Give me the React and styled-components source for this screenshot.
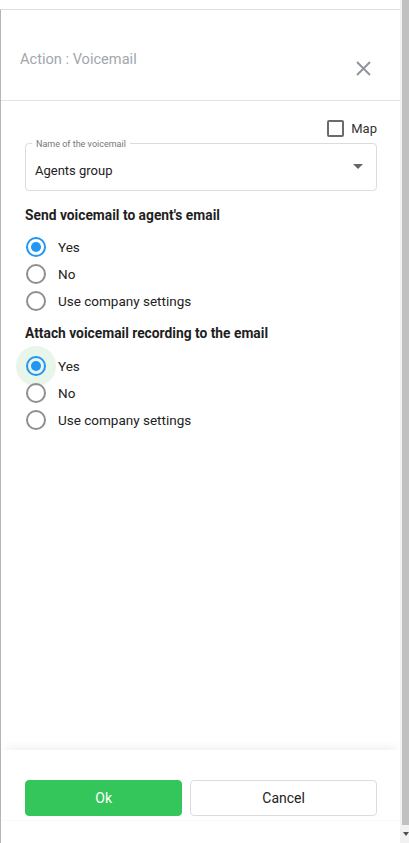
import React from 'react';
import styled, { createGlobalStyle } from 'styled-components';

const Global = createGlobalStyle`
  html, body { margin: 0; padding: 0; background: #fff; }
  body { font-family: Roboto, "Liberation Sans", Arial, sans-serif; color: #222; }
`;

const Page = styled.div`
  display: flex;
  height: 843px;
  width: 409px;
  overflow: hidden;
`;

const Panel = styled.div`
  flex: 1;
  margin-top: 9px;
  border-top: 1px solid #e0e0e0;
  border-left: 1px solid #b5b5b5;
  display: flex;
  flex-direction: column;
`;

const Header = styled.div`
  height: 90px;
  border-bottom: 1px solid #e3e3e3;
  display: flex;
  justify-content: space-between;
  padding: 0 28px 0 19px;
`;

const Title = styled.div`
  margin-top: 40px;
  font-size: 14.6px;
  color: #a2a6ad;
`;

const Close = styled.div`
  margin-top: 50px;
  width: 17px;
  height: 17px;
  color: #8d9299;
`;

const Body = styled.div`
  flex: 1;
  padding: 19px 23px 0 24px;
`;

const MapRow = styled.div`
  display: flex;
  justify-content: flex-end;
  align-items: center;
  gap: 7px;
  font-size: 13px;
  color: #333;
  height: 17px;
`;

const Box = styled.span`
  width: 13px;
  height: 13px;
  border: 2px solid #6b6b6b;
  border-radius: 2px;
`;

const Select = styled.div`
  position: relative;
  margin-top: 6px;
  height: 48px;
  border: 1px solid #dcdcdc;
  border-radius: 4px;
  display: flex;
  align-items: center;
  justify-content: space-between;
  padding: 7px 13px 0 9px;
  box-sizing: border-box;
  font-size: 13px;
  color: #222;
`;

const Legend = styled.span`
  position: absolute;
  top: -5px;
  left: 6px;
  padding: 0 4px;
  background: #fff;
  font-size: 9px;
  color: #777;
  line-height: 10px;
`;

const Arrow = styled.span`
  width: 0;
  height: 0;
  border-left: 5px solid transparent;
  border-right: 5px solid transparent;
  border-top: 5px solid #666;
  margin-top: -9px;
`;

const Section = styled.div`
  font-size: 13.8px;
  font-weight: 700;
  color: #1f1f1f;
  margin-top: ${(p) => p.top}px;
  margin-bottom: ${(p) => p.bottom}px;
`;

const Options = styled.div`
  display: flex;
  flex-direction: column;
  gap: 7px;
`;

const Option = styled.label`
  display: flex;
  align-items: center;
  gap: 12px;
  font-size: 13.5px;
  color: #222;
  height: 20px;
`;

const Radio = styled.span`
  position: relative;
  width: 20px;
  height: 20px;
  box-sizing: border-box;
  border-radius: 50%;
  border: 2px solid ${(p) => (p.checked ? '#2196f3' : '#8f8f8f')};
  display: flex;
  align-items: center;
  justify-content: center;
  &::before {
    content: '';
    display: ${(p) => (p.halo ? 'block' : 'none')};
    position: absolute;
    width: 40px;
    height: 40px;
    border-radius: 50%;
    background: #e8f5e9;
    z-index: -1;
  }
  &::after {
    content: '';
    display: ${(p) => (p.checked ? 'block' : 'none')};
    width: 10px;
    height: 10px;
    border-radius: 50%;
    background: #2196f3;
  }
`;

const RadioWrap = styled.span`
  position: relative;
  z-index: 0;
  display: flex;
  margin-left: 1px;
`;

const Footer = styled.div`
  height: 71px;
  box-shadow: 0 -6px 10px -4px rgba(0, 0, 0, 0.07);
  display: flex;
  align-items: flex-start;
  gap: 8px;
  padding: 30px 23px 0 24px;
  box-sizing: border-box;
  margin-bottom: 22px;
  border-bottom: 1px solid #fafafa;
`;

const Button = styled.button`
  flex: ${(p) => p.grow};
  height: 36px;
  border-radius: 4px;
  font-family: Roboto, "Liberation Sans", Arial, sans-serif;
  font-size: 14px;
  cursor: pointer;
  background: ${(p) => (p.primary ? '#35c65b' : '#fff')};
  color: ${(p) => (p.primary ? '#fff' : '#222')};
  border: 1px solid ${(p) => (p.primary ? '#35c65b' : '#dcdcdc')};
`;

const Scroll = styled.div`
  width: 9px;
  background: #f1f1f1;
  display: flex;
  flex-direction: column;
`;

const Thumb = styled.div`
  flex: 1;
  margin-left: 2px;
  background: #c1c1c1;
`;

const ScrollBtn = styled.div`
  height: 18px;
  display: flex;
  align-items: center;
  justify-content: center;
  padding-left: 2px;
`;

const RadioGroup = ({ items, halo }) => (
  <Options>
    {items.map((it, i) => (
      <Option key={it}>
        <RadioWrap>
          <Radio checked={i === 0} halo={halo && i === 0} />
        </RadioWrap>
        {it}
      </Option>
    ))}
  </Options>
);

const choices = ['Yes', 'No', 'Use company settings'];

export default function App() {
  return (
    <Page>
      <Global />
      <Panel>
        <Header>
          <Title>Action : Voicemail</Title>
          <Close>
            <svg width="17" height="17" viewBox="0 0 17 17">
              <path d="M2 2 L15 15 M15 2 L2 15" stroke="currentColor" strokeWidth="1.8" />
            </svg>
          </Close>
        </Header>
        <Body>
          <MapRow>
            <Box />
            Map
          </MapRow>
          <Select>
            <Legend>Name of the voicemail</Legend>
            Agents group
            <Arrow />
          </Select>
          <Section top={16} bottom={14}>Send voicemail to agent's email</Section>
          <RadioGroup items={choices} />
          <Section top={14} bottom={15}>Attach voicemail recording to the email</Section>
          <RadioGroup items={choices} halo />
        </Body>
        <Footer>
          <Button primary grow="156">Ok</Button>
          <Button grow="188">Cancel</Button>
        </Footer>
      </Panel>
      <Scroll>
        <Thumb />
        <ScrollBtn>
          <svg width="6" height="4" viewBox="0 0 6 4">
            <path d="M0 0 L6 0 L3 4 Z" fill="#505050" />
          </svg>
        </ScrollBtn>
      </Scroll>
    </Page>
  );
}
